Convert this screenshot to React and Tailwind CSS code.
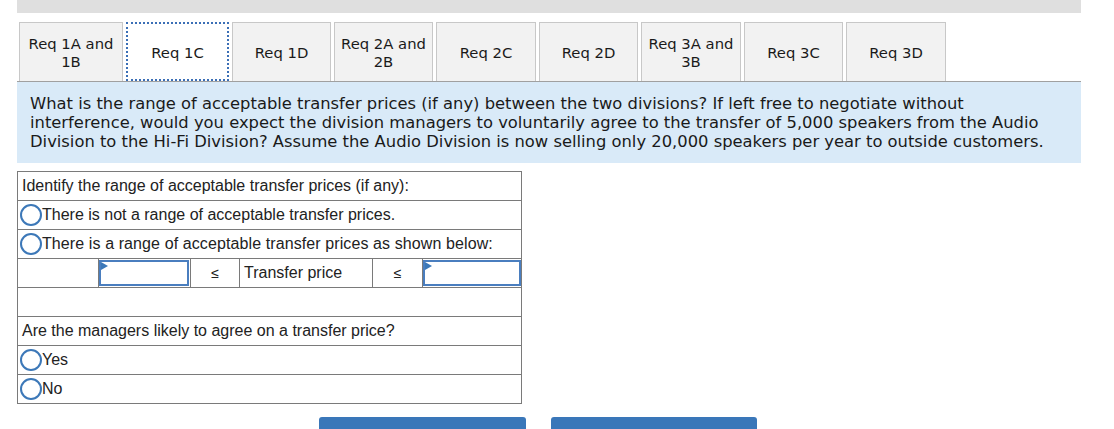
import React from "react";

const tabs = [
  { label: "Req 1A and 1B", w: "w-[104px]" },
  { label: "Req 1C", w: "w-[103px]", active: true },
  { label: "Req 1D", w: "w-[99px]" },
  { label: "Req 2A and 2B", w: "w-[99px]" },
  { label: "Req 2C", w: "w-[100px]" },
  { label: "Req 2D", w: "w-[99px]" },
  { label: "Req 3A and 3B", w: "w-[100px]" },
  { label: "Req 3C", w: "w-[99px]" },
  { label: "Req 3D", w: "w-[100px]" },
];

const Radio = () => (
  <span className="inline-block w-[22px] h-[22px] rounded-full border-2 border-[#3c78b8] shrink-0 ml-[2px]" />
);

const Input = () => (
  <div className="relative w-full h-full border-2 border-[#4a7ebf] bg-white">
    <span className="absolute left-0 top-0 w-0 h-0 border-t-[4px] border-b-[4px] border-l-[7px] border-t-transparent border-b-transparent border-l-[#3c78b8]" />
  </div>
);

const Row = ({ children, last }) => (
  <div className={`flex items-center h-[29px] border-t border-[#7a7a7a] ${last ? "border-b h-[30px]" : ""}`}>
    {children}
  </div>
);

export default function App() {
  return (
    <div className="w-[1114px] h-[429px] bg-white overflow-hidden text-[#1a1a1a]">
      <div className="ml-[17px] w-[1064px]">
        <div className="h-[13px] bg-[#dfdfdf]" />
        <div className="mt-[9px] flex items-end gap-[3px] pl-[2px] border-b border-[#a0a0a0]" style={{ fontFamily: "'DejaVu Sans', Verdana, sans-serif" }}>
          {tabs.map((t, i) => (
            <div
              key={i}
              className={`${t.w} h-[59px] flex items-center justify-center text-center text-[14.8px] leading-[18px] px-1 pt-[2px] ${
                t.active ? "bg-white border-2 border-dotted border-[#3b6fb6]" : "bg-[#f2f2f2] border border-b-0 border-[#c8c8c8]"
              }`}
            >
              {t.label}
            </div>
          ))}
        </div>
        <div className="bg-[#d9eaf8] px-[13px] pt-[12px] pb-[12px] text-[16.35px] leading-[19px] whitespace-nowrap" style={{ fontFamily: "'DejaVu Sans', Verdana, sans-serif" }}>
          What is the range of acceptable transfer prices (if any) between the two divisions? If left free to negotiate without<br />
          interference, would you expect the division managers to voluntarily agree to the transfer of 5,000 speakers from the Audio<br />
          Division to the Hi-Fi Division? Assume the Audio Division is now selling only 20,000 speakers per year to outside customers.
        </div>

        <div className="mt-[8px] w-[505px] border-l border-r border-[#7a7a7a] text-[16px] text-[#222]" style={{ fontFamily: "'Liberation Sans', Arial, sans-serif" }}>
          <Row><span className="pl-[4px]">Identify the range of acceptable transfer prices (if any):</span></Row>
          <Row><Radio /><span>There is not a range of acceptable transfer prices.</span></Row>
          <Row><Radio /><span className="tracking-[0.1px]">There is a range of acceptable transfer prices as shown below:</span></Row>
          <div className="flex h-[29px] border-t border-[#7a7a7a]">
            <div className="w-[80px]" />
            <div className="w-[92px] border-l border-[#7a7a7a] py-px pr-px"><Input /></div>
            <div className="w-[49px] border-l border-[#7a7a7a] flex items-center justify-center text-[14px]">≤</div>
            <div className="w-[133px] border-l border-[#7a7a7a] flex items-center pl-[4px]">Transfer price</div>
            <div className="w-[50px] border-l border-[#7a7a7a] flex items-center justify-center text-[14px]">≤</div>
            <div className="flex-1 border-l border-[#7a7a7a] py-px"><Input /></div>
          </div>
          <Row />
          <Row><span className="pl-[4px]">Are the managers likely to agree on a transfer price?</span></Row>
          <Row><Radio /><span>Yes</span></Row>
          <Row last><Radio /><span>No</span></Row>
        </div>

        <div className="mt-[13px] flex gap-[25px] ml-[302px]">
          <div className="w-[207px] h-[20px] bg-[#3a77b9] rounded-t-[3px]" />
          <div className="w-[206px] h-[20px] bg-[#3a77b9] rounded-t-[3px]" />
        </div>
      </div>
    </div>
  );
}
